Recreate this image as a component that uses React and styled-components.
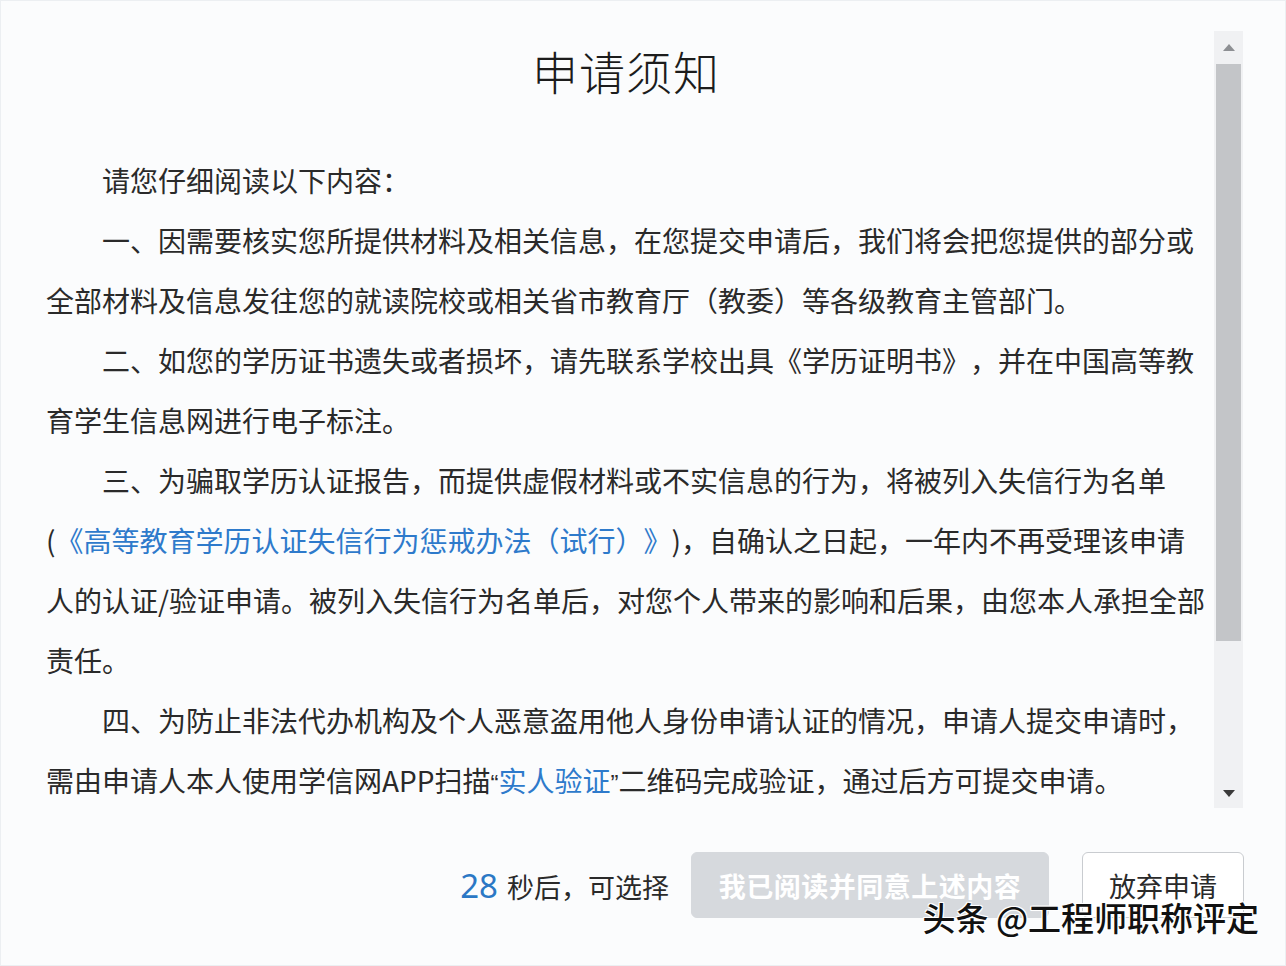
import styled, { createGlobalStyle } from "styled-components";

const GlobalStyle = createGlobalStyle`
  html, body {
    margin: 0;
    padding: 0;
    background: #fbfcfd;
  }
  body {
    font-family: "Noto Sans CJK SC", "Noto Sans", sans-serif;
    color: #262626;
    text-spacing-trim: space-all;
  }
`;

const Frame = styled.div`
  box-sizing: border-box;
  width: 1286px;
  height: 966px;
  border: 1px solid #eceff2;
  background: #fbfcfd;
  display: flex;
  flex-direction: column;
  position: relative;
  overflow: hidden;
`;

const ScrollRow = styled.div`
  display: flex;
  margin-top: 30px;
  height: 777px;
  padding-left: 45px;
  gap: 8px;
`;

const Content = styled.div`
  width: 1160px;
  overflow: hidden;
`;

const Title = styled.h1`
  margin: 0;
  font-size: 46px;
  font-weight: 300;
  line-height: 78px;
  text-align: center;
  color: #1c1c1c;
  letter-spacing: 1px;
`;

const Body = styled.div`
  margin-top: 41px;
  font-size: 28px;
  line-height: 60px;
  color: #2a2a2a;
`;

const Para = styled.p`
  margin: 0;
  text-indent: ${(p) => (p.$indent ? "56px" : "0")};
`;

const Link = styled.span`
  color: #2e7acb;
`;

// narrow western quote marks inside the CJK text
const Quote = styled.span`
  font-family: "Liberation Sans", sans-serif;
  font-size: 24px;
`;

const Scrollbar = styled.div`
  width: 29px;
  background: #f0f1f3;
  display: flex;
  flex-direction: column;
  align-items: center;
`;

const ArrowButton = styled.div`
  height: 33px;
  width: 100%;
  display: flex;
  justify-content: center;
  flex: ${(p) => (p.$bottom ? "1" : "none")};
  align-items: ${(p) => (p.$bottom ? "flex-end" : "center")};
  padding-bottom: ${(p) => (p.$bottom ? "10px" : "0")};
  box-sizing: border-box;
`;

const Thumb = styled.div`
  width: 25px;
  height: 577px;
  background: #c3c5c8;
`;

const Footer = styled.div`
  display: flex;
  justify-content: flex-end;
  align-items: center;
  padding: 44px 41px 0 0;
`;

const Countdown = styled.div`
  font-size: 27px;
  color: #2a2a2a;
  margin-right: 22px;
  display: flex;
  align-items: baseline;
`;

const Seconds = styled.span`
  font-family: "Noto Sans", "Liberation Sans", sans-serif;
  font-size: 33px;
  color: #2b78c5;
  margin-right: 9px;
`;

const Button = styled.button`
  box-sizing: border-box;
  height: 66px;
  padding: 0 22px;
  border-radius: 6px;
  font-family: "Noto Sans CJK SC", sans-serif;
  font-size: 27px;
  cursor: ${(p) => (p.disabled ? "not-allowed" : "pointer")};
  border: 1px solid ${(p) => (p.$primary ? "#d6d9dd" : "#c9ccd0")};
  background: ${(p) => (p.$primary ? "#d6d9dd" : "#ffffff")};
  color: ${(p) => (p.$primary ? "#ffffff" : "#2a2a2a")};
  font-weight: ${(p) => (p.$primary ? 700 : 400)};
  letter-spacing: ${(p) => (p.$primary ? "0.5px" : "0")};
  width: ${(p) => p.$width};
  & + & {
    margin-left: 33px;
  }
`;

const Watermark = styled.div`
  position: absolute;
  right: 26px;
  bottom: 24px;
  font-size: 33px;
  font-weight: 500;
  color: #111;
  text-shadow: 0 0 2px #fff, 1px 1px 0 #fff, -1px -1px 0 #fff, 1px -1px 0 #fff,
    -1px 1px 0 #fff;
`;

const Triangle = ({ down }) => (
  <svg width="14" height="9" viewBox="0 0 14 9">
    <path
      d={down ? "M1 1 L13 1 L7 8 Z" : "M1 8 L13 8 L7 1 Z"}
      fill={down ? "#3a3a3a" : "#8d8f93"}
    />
  </svg>
);

export default function App() {
  return (
    <>
      <GlobalStyle />
      <Frame>
        <ScrollRow>
          <Content>
            <Title>申请须知</Title>
            <Body>
              <Para $indent>请您仔细阅读以下内容：</Para>
              <Para $indent>
                一、因需要核实您所提供材料及相关信息，在您提交申请后，我们将会把您提供的部分或全部材料及信息发往您的就读院校或相关省市教育厅（教委）等各级教育主管部门。
              </Para>
              <Para $indent>
                二、如您的学历证书遗失或者损坏，请先联系学校出具《学历证明书》，并在中国高等教育学生信息网进行电子标注。
              </Para>
              <Para $indent>
                三、为骗取学历认证报告，而提供虚假材料或不实信息的行为，将被列入失信行为名单 (
                <Link>《高等教育学历认证失信行为惩戒办法（试行）》</Link>
                )，自确认之日起，一年内不再受理该申请人的认证/验证申请。被列入失信行为名单后，对您个人带来的影响和后果，由您本人承担全部责任。
              </Para>
              <Para $indent>
                四、为防止非法代办机构及个人恶意盗用他人身份申请认证的情况，申请人提交申请时，需由申请人本人使用学信网APP扫描
                <Quote>“</Quote>
                <Link>实人验证</Link>
                <Quote>”</Quote>
                二维码完成验证，通过后方可提交申请。
              </Para>
            </Body>
          </Content>
          <Scrollbar>
            <ArrowButton>
              <Triangle />
            </ArrowButton>
            <Thumb />
            <ArrowButton $bottom>
              <Triangle down />
            </ArrowButton>
          </Scrollbar>
        </ScrollRow>
        <Footer>
          <Countdown>
            <Seconds>28</Seconds>秒后，可选择
          </Countdown>
          <Button $primary disabled $width="358px">
            我已阅读并同意上述内容
          </Button>
          <Button $width="162px">放弃申请</Button>
        </Footer>
        <Watermark>头条 @工程师职称评定</Watermark>
      </Frame>
    </>
  );
}
